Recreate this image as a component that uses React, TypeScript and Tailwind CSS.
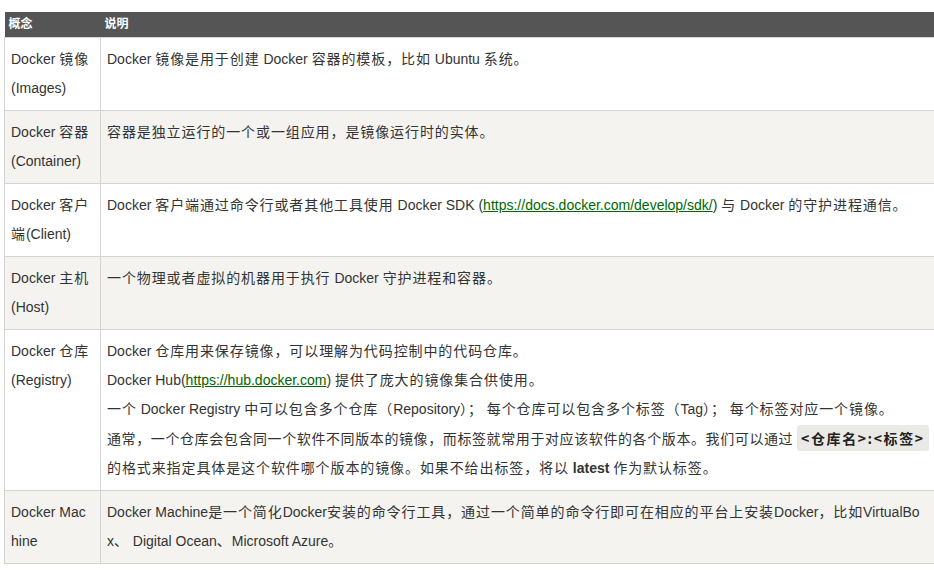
import React from "react";

const font = { fontFamily: '"Liberation Sans", Arial, "Noto Sans CJK SC", sans-serif' };

const CJK_RE = /([\u3000-\u303f\u4e00-\u9fff\uff00-\uffef]+)/;

function T({ s, tight }: { s: string; tight?: boolean }) {
  const parts = s.split(CJK_RE);
  return (
    <>
      {parts.map((p, i) =>
        p === "" ? null : i % 2 === 1 ? (
          <span key={i} className={tight ? "tracking-[0.6px]" : "tracking-[0.9px]"}>
            {p}
          </span>
        ) : (
          <React.Fragment key={i}>{p}</React.Fragment>
        )
      )}
    </>
  );
}

const Link = ({ children }: { children: React.ReactNode }) => (
  <a className="text-[#006600] underline">{children}</a>
);

type Row = { name: React.ReactNode; desc: React.ReactNode };

const rows: Row[] = [
  {
    name: (
      <>
        <T s="Docker 镜像" />
        <br />
        (Images)
      </>
    ),
    desc: <T s="Docker 镜像是用于创建 Docker 容器的模板，比如 Ubuntu 系统。" />,
  },
  {
    name: (
      <>
        <T s="Docker 容器" />
        <br />
        (Container)
      </>
    ),
    desc: <T s="容器是独立运行的一个或一组应用，是镜像运行时的实体。" />,
  },
  {
    name: (
      <>
        <T s="Docker 客户" />
        <br />
        <T s="端(Client)" />
      </>
    ),
    desc: (
      <>
        <T s="Docker 客户端通过命令行或者其他工具使用 Docker SDK (" />
        <Link>https://docs.docker.com/develop/sdk/</Link>
        <T s=") 与 Docker 的守护进程通信。" />
      </>
    ),
  },
  {
    name: (
      <>
        <T s="Docker 主机" />
        <br />
        (Host)
      </>
    ),
    desc: <T s="一个物理或者虚拟的机器用于执行 Docker 守护进程和容器。" />,
  },
  {
    name: (
      <>
        <T s="Docker 仓库" />
        <br />
        (Registry)
      </>
    ),
    desc: (
      <>
        <p>
          <T s="Docker 仓库用来保存镜像，可以理解为代码控制中的代码仓库。" />
        </p>
        <p>
          Docker Hub(<Link>https://hub.docker.com</Link>)
          <T s=" 提供了庞大的镜像集合供使用。" />
        </p>
        <p>
          <T s="一个 Docker Registry 中可以包含多个仓库（Repository）； 每个仓库可以包含多个标签（Tag）； 每个标签对应一个镜像。" />
        </p>
        <p>
          <T tight s="通常，一个仓库会包含同一个软件不同版本的镜像，而标签就常用于对应该软件的各个版本。我们可以通过 " />
          <code
            className="rounded-[3px] bg-[#ebe9e6] px-[4px] py-[3px] text-[14px] font-bold tracking-[1.6px] text-[#222]"
            style={{ fontFamily: '"Noto Sans CJK SC", "DejaVu Sans Mono", monospace' }}
          >
            &lt;仓库名&gt;:&lt;标签&gt;
          </code>
          <br />
          <T s="的格式来指定具体是这个软件哪个版本的镜像。如果不给出标签，将以 " />
          <b>latest</b>
          <T s=" 作为默认标签。" />
        </p>
      </>
    ),
  },
  {
    name: (
      <>
        Docker Mac
        <br />
        hine
      </>
    ),
    desc: (
      <>
        <T s="Docker Machine是一个简化Docker安装的命令行工具，通过一个简单的命令行即可在相应的平台上安装Docker，比如VirtualBo" />
        <br />
        <T s="x、 Digital Ocean、Microsoft Azure。" />
      </>
    ),
  },
];

export default function App() {
  return (
    <div className="h-[570px] w-[934px] overflow-hidden bg-white pt-[12px] pl-[4px]" style={font}>
      <table className="w-[940px] table-fixed border-collapse text-[14px] leading-[29px] text-[#333]">
        <colgroup>
          <col className="w-[96px]" />
          <col />
        </colgroup>
        <thead>
          <tr className="h-[25px] bg-[#555555] text-left text-[12px] leading-[25px] text-white">
            <th className="px-[4px] py-0 font-bold">概念</th>
            <th className="px-[4px] py-0 font-bold">说明</th>
          </tr>
        </thead>
        <tbody>
          {rows.map((r, i) => (
            <tr key={i} className={i % 2 === 1 ? "bg-[#f4f3f0]" : "bg-white"}>
              <td className="whitespace-nowrap border border-[#d4d4d4] px-[6px] py-[7px] align-top">{r.name}</td>
              <td className="whitespace-nowrap border border-[#d4d4d4] px-[6px] py-[7px] align-top">{r.desc}</td>
            </tr>
          ))}
        </tbody>
      </table>
    </div>
  );
}
